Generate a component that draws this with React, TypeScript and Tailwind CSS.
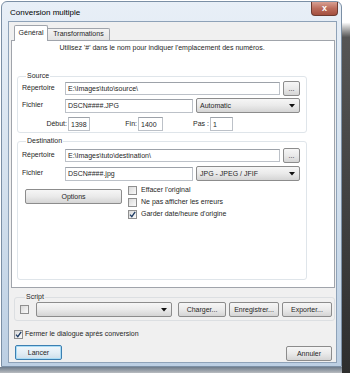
import type { ReactNode } from "react";

function Check({ checked = false }: { checked?: boolean }) {
  return (
    <span className="flex h-[9px] w-[9px] shrink-0 items-center justify-center border border-[#8f8f8f] bg-gradient-to-br from-[#d9d9d9] to-[#fbfbfb]">
      {checked ? (
        <svg width="7" height="7" viewBox="0 0 7 7">
          <path d="M1 3.6 L2.8 5.6 L6.2 0.8" stroke="#1d3b63" strokeWidth="1.3" fill="none" />
        </svg>
      ) : null}
    </span>
  );
}

function Arrow() {
  return (
    <svg width="6" height="4" viewBox="0 0 6 4" className="shrink-0">
      <path d="M0 0 H6 L3 3.5 Z" fill="#111" />
    </svg>
  );
}

function Button({ children, className = "" }: { children: ReactNode; className?: string }) {
  return (
    <div
      className={`flex h-[15px] shrink-0 items-center justify-center rounded-[2px] border border-[#8c8c8c] bg-gradient-to-b from-[#f6f6f6] via-[#eaeaea] to-[#d5d5d5] leading-none ${className}`}
    >
      {children}
    </div>
  );
}

function Combo({ value, className = "" }: { value: string; className?: string }) {
  return (
    <div
      className={`flex h-[15px] shrink-0 items-center justify-between rounded-[2px] border border-[#8c8c8c] bg-gradient-to-b from-[#f6f6f6] via-[#eaeaea] to-[#d5d5d5] pl-[3px] pr-[4px] leading-none ${className}`}
    >
      <span>{value}</span>
      <Arrow />
    </div>
  );
}

function Input({ value, className = "" }: { value: string; className?: string }) {
  return (
    <div
      className={`flex shrink-0 items-center overflow-hidden border border-[#bcc1c8] border-t-[#9da2a9] bg-white pl-[2px] leading-none ${className}`}
    >
      {value}
    </div>
  );
}

function Group({
  label,
  className = "",
  children,
}: {
  label: string;
  className?: string;
  children: ReactNode;
}) {
  return (
    <fieldset className={`rounded-[3px] border border-[#dfe5ea] ${className}`}>
      <legend className="ml-[4px] px-[1px] leading-[8px]">{label}</legend>
      {children}
    </fieldset>
  );
}

export default function App() {
  return (
    <div className="flex h-[373px] w-[350px] overflow-hidden bg-white font-['Liberation_Sans',Arial,sans-serif] text-[7px] text-[#262626]">
      <div className="flex w-[342px] flex-col">
        <div className="ml-[1px] mt-[1px] flex h-[366px] flex-col rounded-t-[6px] border border-[#7b8fa5] bg-gradient-to-b from-[#e8eff7] via-[#d4e1ee] to-[#bccfe3]">
          {/* title bar */}
          <div className="flex h-[19px] items-start justify-between">
            <span className="ml-[8px] mt-[6px] text-[8px] leading-[10px] text-black">
              Conversion multiple
            </span>
            <div className="mr-[3px] flex h-[14px] w-[27px] items-center justify-center rounded-b-[4px] border border-t-0 border-[#6d3b31] bg-gradient-to-b from-[#d9a093] via-[#bb6c5c] to-[#a4503f] text-[9px] font-bold leading-none text-white">
              x
            </div>
          </div>

          {/* client */}
          <div className="ml-[6px] mr-[4px] flex h-[342px] flex-col border border-[#8ea2b8] bg-[#f0f0f0]">
            <div className="ml-[2px] mr-[1px] mt-[3px]">
              <div className="flex h-[15px] items-end pl-[3px]">
                <div className="relative z-10 -mb-[1px] flex h-[16px] w-[34px] items-center justify-center rounded-t-[2px] border border-b-0 border-[#a0a4ab] bg-white">
                  Général
                </div>
                <div className="flex h-[12px] w-[62px] items-center justify-center rounded-tr-[2px] border border-b-0 border-l-0 border-[#a0a4ab] bg-gradient-to-b from-[#f4f4f4] to-[#e2e2e2]">
                  Transformations
                </div>
              </div>

              <div className="h-[248px] border border-[#a0a4ab] bg-white">
                <div className="ml-[5px] w-[290px]">
                  <p className="mt-[2px] text-center leading-[10px]">
                    Utilisez '#' dans le nom pour indiquer l'emplacement des numéros.
                  </p>

                  <Group label="Source" className="mt-[19px] pb-[1px] pl-[4px] pr-[5px]">
                    <div className="mt-[2px] flex h-[13px] items-center">
                      <span className="w-[43px] shrink-0">Répertoire</span>
                      <Input value="E:\Images\tuto\source\" className="h-[13px] w-[215px]" />
                      <Button className="ml-[3px] h-[13px] w-[17px]">...</Button>
                    </div>
                    <div className="mt-[3px] flex h-[15px] items-center">
                      <span className="w-[43px] shrink-0">Fichier</span>
                      <Input value="DSCN####.JPG" className="h-[14px] w-[128px]" />
                      <Combo value="Automatic" className="ml-[3px] w-[104px]" />
                    </div>
                    <div className="mt-[4px] grid h-[14px] grid-cols-[46px_22px_48px_25px_47px_23px] items-center">
                      <span className="pr-[1px] text-right">Début:</span>
                      <Input value="1398" className="h-[14px] w-[22px]" />
                      <span className="pr-[1px] text-right">Fin:</span>
                      <Input value="1400" className="h-[14px] w-[25px]" />
                      <span className="pr-[1px] text-right">Pas :</span>
                      <Input value="1" className="h-[14px] w-[23px]" />
                    </div>
                  </Group>

                  <Group label="Destination" className="mt-[4px] pb-[59px] pl-[4px] pr-[5px]">
                    <div className="mt-[3px] flex h-[14px] items-center">
                      <span className="w-[43px] shrink-0">Répertoire</span>
                      <Input value="E:\Images\tuto\destination\" className="h-[13px] w-[215px]" />
                      <Button className="ml-[3px] h-[14px] w-[17px]">...</Button>
                    </div>
                    <div className="mt-[4px] flex h-[15px] items-center">
                      <span className="w-[43px] shrink-0">Fichier</span>
                      <Input value="DSCN####.jpg" className="h-[14px] w-[128px]" />
                      <Combo value="JPG - JPEG / JFIF" className="ml-[3px] w-[104px]" />
                    </div>
                    <div className="mt-[3px] flex">
                      <Button className="ml-[3px] mt-[5px] w-[97px]">Options</Button>
                      <div className="ml-[6px] flex flex-col">
                        <div className="flex h-[12px] items-center gap-[4px]">
                          <Check />
                          <span>Effacer l'original</span>
                        </div>
                        <div className="flex h-[12px] items-center gap-[4px]">
                          <Check />
                          <span>Ne pas afficher les erreurs</span>
                        </div>
                        <div className="flex h-[12px] items-center gap-[4px]">
                          <Check checked />
                          <span>Garder date/heure d'origine</span>
                        </div>
                      </div>
                    </div>
                  </Group>
                </div>
              </div>
            </div>

            <fieldset className="ml-[5px] mr-[1px] mt-[5px] rounded-[3px] border border-[#dcdfe2] pb-[3px] pl-[5px]">
              <legend className="ml-[5px] px-[1px] leading-[8px]">Script</legend>
              <div className="mt-[1px] flex h-[15px] items-center">
                <Check />
                <Combo value="" className="ml-[7px] w-[136px]" />
                <Button className="ml-[6px] w-[48px]">Charger...</Button>
                <Button className="ml-[3px] w-[50px]">Enregistrer...</Button>
                <Button className="ml-[3px] w-[50px]">Exporter...</Button>
              </div>
            </fieldset>

            <div className="ml-[5px] mt-[9px] flex h-[9px] items-center gap-[2px]">
              <Check checked />
              <span>Fermer le dialogue après conversion</span>
            </div>

            <div className="ml-[6px] mr-[4px] mt-[6px] flex items-start justify-between">
              <div className="flex h-[15px] w-[47px] items-center justify-center rounded-[2px] border border-[#3c7fb1] bg-gradient-to-b from-[#f1f7fb] via-[#e3eef6] to-[#cfdfea] leading-none shadow-[inset_0_0_0_1px_#a9dcf6]">
                Lancer
              </div>
              <Button className="mt-[1px] h-[14px] w-[46px]">Annuler</Button>
            </div>
          </div>
        </div>
        <div className="flex-1 bg-gradient-to-b from-[#6d7b8a] to-[#b9bcc0]" />
      </div>
      <div className="flex-1 bg-gradient-to-b from-white from-[6%] via-[#555] via-[10%] to-[#2e2e2e]" />
    </div>
  );
}
